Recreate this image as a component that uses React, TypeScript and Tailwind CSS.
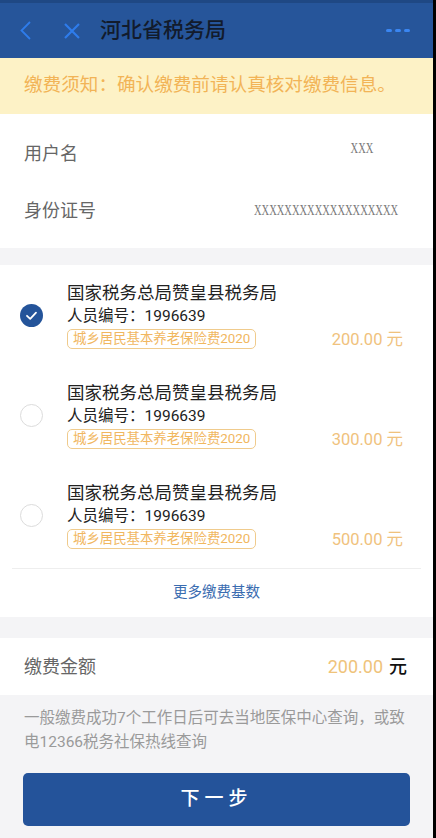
import {useState} from "react";

const font = {fontFamily: "Roboto, 'Noto Sans CJK SC', sans-serif"};
const serif = {fontFamily: "'Liberation Serif', serif"};

const items = [
    {name: "国家税务总局赞皇县税务局", code: "1996639", tag: "城乡居民基本养老保险费2020", amount: "200.00"},
    {name: "国家税务总局赞皇县税务局", code: "1996639", tag: "城乡居民基本养老保险费2020", amount: "300.00"},
    {name: "国家税务总局赞皇县税务局", code: "1996639", tag: "城乡居民基本养老保险费2020", amount: "500.00"},
];

function Check({checked}: {checked: boolean}) {
    if (!checked) {
        return <div className="w-[23px] h-[23px] rounded-full border border-[#dcdcdc] bg-white"/>;
    }
    return (
        <svg width="23" height="23" viewBox="0 0 23 23">
            <circle cx="11.5" cy="11.5" r="11.5" fill="#24549a"/>
            <path d="M7 11.8 L10.2 14.8 L16 8.6" stroke="white" strokeWidth="1.8" fill="none" strokeLinecap="round"
                  strokeLinejoin="round"/>
        </svg>
    );
}

function App() {
    const [active, setActive] = useState(0);

    return (
        <main className="w-full min-h-screen bg-[#f4f4f6] border-r-[3px] border-black" style={font}>
            <header className="h-[58px] bg-[#26559a] border-t-[3px] border-[#1f4884] flex items-center">
                <div className="w-[64px] pl-[20px] flex items-center">
                    <svg width="11" height="19" viewBox="0 0 11 19">
                        <path d="M10 1 L1.5 9.5 L10 18" stroke="#2e7ceb" strokeWidth="1.8" fill="none"/>
                    </svg>
                </div>
                <div className="w-[36px] flex items-center">
                    <svg width="16" height="16" viewBox="0 0 16 16">
                        <path d="M1 1 L15 15 M15 1 L1 15" stroke="#2e7ceb" strokeWidth="2.2" fill="none"/>
                    </svg>
                </div>
                <h1 className="text-[21px] text-[#121b2c] leading-none font-medium">河北省税务局</h1>
                <div className="ml-auto mr-[23px] flex gap-[3px]">
                    <span className="w-[6px] h-[3px] bg-[#3a86f2] rounded-sm"/>
                    <span className="w-[6px] h-[3px] bg-[#3a86f2] rounded-sm"/>
                    <span className="w-[6px] h-[3px] bg-[#3a86f2] rounded-sm"/>
                </div>
            </header>

            <div className="h-[56px] bg-[#fdf2c6] flex items-center px-[24px]">
                <p className="text-[18.6px] text-[#f2b457] whitespace-nowrap">缴费须知：确认缴费前请认真核对缴费信息。</p>
            </div>

            <section className="bg-white pt-[11px] pb-[9px]">
                <div className="h-[57px] flex items-center justify-between pl-[24px] pr-[60px]">
                    <span className="text-[18px] text-[#666]">用户名</span>
                    <span className="inline-block text-[14px] text-[#777] -mt-[10px] scale-x-[0.75] origin-right"
                          style={serif}>XXX</span>
                </div>
                <div className="h-[57px] flex items-center justify-between pl-[24px] pr-[35px]">
                    <span className="text-[18px] text-[#666]">身份证号</span>
                    <span className="inline-block text-[14px] text-[#777] scale-x-[0.75] origin-right"
                          style={serif}>XXXXXXXXXXXXXXXXXXX</span>
                </div>
            </section>

            <section className="bg-white mt-[17px] pt-[16px]">
                <div className="flex flex-col gap-[32px]">
                    {items.map((item, index) => (
                        <div key={index} className="flex items-center cursor-pointer pl-[20px] pr-[30px]"
                             onClick={() => setActive(index)}>
                            <Check checked={index === active}/>
                            <div className="flex-1 ml-[24px]">
                                <div className="text-[17.5px] leading-[24px] text-[#222]">{item.name}</div>
                                <div className="text-[15.5px] leading-[22px] text-[#222]">人员编号：{item.code}</div>
                                <div className="h-[20px] flex items-center justify-between mt-[2px]">
                                    <span
                                        className="h-[20px] px-[5px] flex items-center border border-[#f0cb8c] rounded-[5px] text-[13.4px] leading-[18px] text-[#f1b75f]">{item.tag}</span>
                                    <span className="text-[16.5px] leading-[20px] mt-[2px] text-[#f0c27d]">{item.amount} 元</span>
                                </div>
                            </div>
                        </div>
                    ))}
                </div>
                <div className="mt-[19px] mx-[12px] h-px bg-[#eeeeee]"/>
                <div className="h-[48px] flex items-center justify-center">
                    <span className="text-[14.5px] text-[#3a6cb0]">更多缴费基数</span>
                </div>
            </section>

            <section className="bg-white mt-[21px] h-[57px] flex items-center justify-between pl-[24px] pr-[26px]">
                <span className="text-[18px] text-[#666]">缴费金额</span>
                <span className="flex items-center gap-[6px]">
                    <span className="text-[18px] text-[#efc37a]">200.00</span>
                    <span className="text-[18px] text-[#111] font-medium">元</span>
                </span>
            </section>

            <p className="px-[24px] pt-[11px] text-[15.5px] leading-[24px] text-[#9a9a9a]">
                一般缴费成功7个工作日后可去当地医保中心查询，或致电12366税务社保热线查询
            </p>

            <div className="px-[23px] pt-[19px] pb-[12px]">
                <button
                    className="w-full h-[53px] rounded-[5px] bg-[#24539a] text-white text-[19px] font-medium tracking-[5px] flex items-center justify-center">
                    下一步
                </button>
            </div>
        </main>
    )
}

export default App
